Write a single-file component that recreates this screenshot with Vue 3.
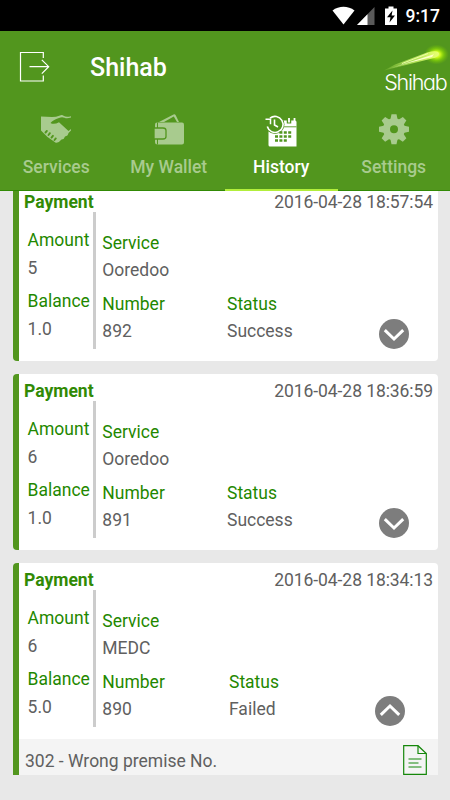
<script setup>
import { ref } from 'vue';

const activeTab = ref('History');

const tabs = ['Services', 'My Wallet', 'History', 'Settings'];

const payments = ref([
  { id: 892, amount: '5', balance: '1.0', service: 'Ooredoo', status: 'Success', date: '2016-04-28 18:57:54', open: false, message: '' },
  { id: 891, amount: '6', balance: '1.0', service: 'Ooredoo', status: 'Success', date: '2016-04-28 18:36:59', open: false, message: '' },
  { id: 890, amount: '6', balance: '5.0', service: 'MEDC', status: 'Failed', date: '2016-04-28 18:34:13', open: true, message: '302 - Wrong premise No.' }
]);

// -- Methods --

// Opens or closes the message under a payment
function togglePayment(payment) {
  payment.open = !payment.open;
}
</script>

<template>
  <div class="screen">

    <div class="status-bar">
      <svg class="status-icons" width="75" height="31" viewBox="0 0 75 31">
        <path d="M1.500 10.500C8 5.600 17 5.600 23.500 10.500L12.500 24.500Z" fill="#fff" />
        <path d="M26 25L43.500 7V25Z" fill="#5a5a5a" />
        <path d="M26 25L36.500 14.200V25Z" fill="#fff" />
        <path d="M54 8.500h3.500V6.500h5v2H66V25H54Z" fill="#fff" />
        <path d="M61.500 10.500L56 17.300H59.500L58.500 22.500L64 15.500H60.600Z" fill="#000" />
      </svg>
      <span class="clock">9:17</span>
    </div>

    <header class="app-bar">
      <svg class="exit-icon" width="32" height="32" viewBox="0 0 32 32" fill="none" stroke="#fff">
        <path d="M24.300 7V1.500H1.500V30H24.300V24.500" stroke-width="1.200" />
        <path d="M10.500 15.700H30M22.800 8.800L29.700 15.700L22.800 22.700" stroke-width="1.200" />
      </svg>
      <h1>Shihab</h1>
      <svg class="logo" width="68" height="62" viewBox="0 0 68 62">
        <defs>
          <linearGradient id="tail" gradientUnits="userSpaceOnUse" x1="2" y1="30" x2="56" y2="13">
            <stop offset="0" stop-color="#8cc63e" stop-opacity="0.3" />
            <stop offset="0.4" stop-color="#b4e65a" stop-opacity="0.8" />
            <stop offset="1" stop-color="#e6ff70" />
          </linearGradient>
          <linearGradient id="core" gradientUnits="userSpaceOnUse" x1="4" y1="29" x2="52" y2="15">
            <stop offset="0" stop-color="#fff" stop-opacity="0.2" />
            <stop offset="0.5" stop-color="#fdffe0" />
            <stop offset="1" stop-color="#ffffc0" />
          </linearGradient>
          <radialGradient id="glow">
            <stop offset="0" stop-color="#f8ff90" />
            <stop offset="0.3" stop-color="#d2ff1c" stop-opacity="0.95" />
            <stop offset="0.6" stop-color="#98e800" stop-opacity="0.55" />
            <stop offset="1" stop-color="#7ac800" stop-opacity="0" />
          </radialGradient>
        </defs>
        <ellipse cx="54.500" cy="14.500" rx="12.500" ry="10" fill="url(#glow)" />
        <path d="M2 30.500L13 24.500L45 12.500Q56 9.500 57 13.500Q57 17 50 18.500L14 27.500Z" fill="url(#tail)" />
        <path d="M6 29L52 14.200L50 17L28 22.500Z" fill="url(#core)" />
        <path d="M20 23.500L46 13.500" stroke="#f2ffb0" stroke-width="0.900" />
        <text x="2.300" y="50">Shihab</text>
      </svg>
    </header>

    <nav class="tabs">
      <button v-for="tab in tabs" :key="tab" class="tab" :class="{ active: tab === activeTab }" @click="activeTab = tab">
        <svg v-if="tab === 'Services'" width="32" height="34" viewBox="0 0 32 34">
          <path d="M1 3.500L12 4Q16 4 20 2.500Q22 1.500 24 3T31 3.300V4.500Q27 6 24.500 4.800Q22 3.500 19 5Q13 7 10.500 10Q14 12 19 9.300L28.500 18L31 16V17.500L28.500 20Q28 23 25 23.500Q24.500 26 21.500 26.500Q17 32 14 28.500L7.500 24L1 17.500Z" fill="currentColor" />
          <path d="M5.500 19.500l1.400-1.600M8.500 22l1.400-1.800M11.500 24.600l1.400-1.800M14.500 27l1.300-1.600" stroke="#52961e" stroke-width="1.900" stroke-linecap="round" />
        </svg>
        <svg v-else-if="tab === 'My Wallet'" width="32" height="34" viewBox="0 0 32 34">
          <path d="M6 9L20.500 1.500Q22 1 22.700 2.300L26 9H24L20.800 3.500L11 9Z" fill="currentColor" />
          <path d="M4 9.500H29Q31 9.500 31 11.500V29.500Q31 31.500 29 31.500H4.500Q2 31.500 2 29V11.500Q2 9.500 4 9.500Z" fill="currentColor" />
          <path d="M4.500 9.500V31.500" stroke="#52961e" />
          <path d="M1 15H10Q13 15 13 17.500V23.500Q13 26 10 26H1Z" fill="currentColor" stroke="#52961e" stroke-width="1.300" />
        </svg>
        <svg v-else-if="tab === 'History'" width="32" height="34" viewBox="0 -2 32 34">
          <path d="M16.500 5.500H30Q31.500 5.500 31.500 7V31.500H5Q3.500 31.500 3.500 30V16L16 12.500V12H17Z" fill="#fff" />
          <path d="M19 11.800H31.500" stroke="#52961e" stroke-width="0.900" />
          <path d="M24 1.500V8.500" stroke="#52961e" stroke-width="4.500" />
          <path d="M24 3V7.500M29.500 3V7.500" stroke="#fff" stroke-width="1.800" />
          <circle cx="10" cy="9.500" r="9.500" fill="#52961e" />
          <path d="M5 3.200A8 8 0 1 1 2.300 11.500" fill="none" stroke="#fff" stroke-width="1.600" />
          <path d="M0.500 4.200H5.500V9.200" fill="none" stroke="#fff" stroke-width="1.500" />
          <path d="M9.500 4.500V10L13 12" fill="none" stroke="#fff" stroke-width="1.600" />
          <path d="M14.400 17.500H26.500M10 21.500H26.500M10 25.500H22.500" fill="none" stroke="#52961e" stroke-width="2.700" stroke-dasharray="3 1.400" />
        </svg>
        <svg v-else width="32" height="34" viewBox="0 0 32 34">
          <g fill="currentColor">
            <path v-for="angle in [0, 45, 90, 135, 180, 225, 270, 315]" :key="angle" d="M13.500 1.300H18.500L20 8.300H12Z" :transform="`rotate(${angle} 16 16.300)`" />
          </g>
          <circle cx="16" cy="16.300" r="7.500" fill="none" stroke="currentColor" stroke-width="7" />
        </svg>
        <span>{{ tab }}</span>
      </button>
    </nav>

    <main class="history">
      <div class="payment-list">
        <article v-for="payment in payments" :key="payment.id" class="payment">
          <div class="payment-head">
            <strong>Payment</strong>
            <time>{{ payment.date }}</time>
          </div>
          <div class="payment-body">
            <dl class="amounts">
              <dt>Amount</dt>
              <dd>{{ payment.amount }}</dd>
              <dt>Balance</dt>
              <dd>{{ payment.balance }}</dd>
            </dl>
            <dl class="details">
              <dt>Service</dt>
              <dd>{{ payment.service }}</dd>
              <dt>Number</dt>
              <dd>{{ payment.id }}</dd>
            </dl>
            <dl class="state" :class="{ shifted: payment.open }">
              <dt>Status</dt>
              <dd>{{ payment.status }}</dd>
            </dl>
            <button class="toggle" :class="{ open: payment.open }" @click="togglePayment(payment)">
              <svg width="30" height="30" viewBox="0 0 30 30">
                <circle cx="15" cy="15" r="15" fill="#7d7d7d" />
                <path d="M5.800 11.200L15 20L24.200 11.200" fill="none" stroke="#fff" stroke-width="3" />
              </svg>
            </button>
          </div>
          <div v-if="payment.open" class="payment-message">
            <span>{{ payment.message }}</span>
            <svg width="24" height="30" viewBox="0 0 24 30" fill="none" stroke="#15870a" stroke-width="1.200">
              <path d="M0.700 0.700H15L23.300 8.500V29.300H0.700Z" />
              <path d="M15 0.700V8.500H23.300M5.500 14H18.500M5.500 18H15.500M5.500 22H18.500" />
            </svg>
          </div>
        </article>
      </div>
    </main>

  </div>
</template>

<style>
body {
  margin: 0;
}
</style>

<style scoped>
.screen {
  --green: #52961e;
  --label: #1f8800;
  --text: #606060;
  display: flex;
  flex-direction: column;
  width: 450px;
  height: 800px;
  overflow: hidden;
  background: #e8e8e8;
  font-family: Roboto, sans-serif;
  font-size: 17.5px;
  color: var(--text);
}

button {
  padding: 0;
  border: 0;
  background: none;
  font: inherit;
}

svg {
  display: block;
}

.status-bar {
  display: flex;
  justify-content: flex-end;
  align-items: center;
  height: 31px;
  padding-right: 10px;
  background: #000;
  color: #fff;
}

.clock {
  padding-top: 2px;
  line-height: 31px;
  font-weight: 500;
}

.app-bar {
  display: flex;
  align-items: center;
  height: 72px;
  background: var(--green);
}

.exit-icon {
  margin-left: 19px;
}

h1 {
  flex: 1;
  margin: 0 0 0 39px;
  font-size: 25px;
  font-weight: 500;
  color: #fff;
}

.logo {
  align-self: flex-end;
  margin-bottom: 1px;
}

.logo text {
  font: 300 21.5px Inter, sans-serif;
  font-feature-settings: "cv11";
  letter-spacing: -1.3px;
  fill: #fff;
}

.tabs {
  display: flex;
  height: 88px;
  background: var(--green);
  box-shadow: inset 0 -1px #318a05;
}

.tab {
  box-sizing: border-box;
  display: flex;
  flex: 1;
  flex-direction: column;
  align-items: center;
  padding-top: 10px;
  border-bottom: 2px solid transparent;
  font-weight: 500;
  color: #a8cb8e;
}

.tab span {
  margin-top: 8px;
  line-height: 24px;
}

.tab.active {
  border-bottom-color: #b2ee3b;
  color: #fff;
}

.history {
  height: 584px;
  overflow: hidden;
}

/* The list is scrolled a little under the tabs */
.payment-list {
  display: flex;
  flex-direction: column;
  gap: 13px;
  margin: -6px 12.5px 0 13px;
}

.payment {
  box-sizing: border-box;
  min-height: 176px;
  border-left: 6px solid var(--green);
  border-radius: 4px;
  background: #fff;
  overflow: hidden;
}

.payment-head {
  display: flex;
  justify-content: space-between;
  height: 21.500px;
  padding: 5.500px 4.500px 0 5px;
  line-height: 23px;
}

.payment-head strong {
  color: #318a05;
}

.payment-head time {
  letter-spacing: -0.08px;
}

.payment-body {
  display: flex;
  height: 136.500px;
  padding-bottom: 12.500px;
}

dl,
dd {
  margin: 0;
}

dt,
dd {
  line-height: 27.500px;
  white-space: nowrap;
}

dt {
  color: var(--label);
}

dd + dt {
  margin-top: 6px;
}

.amounts {
  box-sizing: border-box;
  width: 77px;
  padding: 15px 0 0 8.600px;
  border-right: 3px solid #ccc;
}

.details {
  width: 118.500px;
  padding: 17.500px 0 0 6.300px;
}

.state {
  flex: 1;
  padding: 78.500px 0 0 6.200px;
}

.state.shifted {
  padding-left: 8.200px;
}

.toggle {
  align-self: flex-end;
  margin-right: 29px;
}

.toggle.open {
  margin: 0 32.500px 1px 0;
}

.toggle.open svg {
  transform: rotate(180deg);
}

.payment-message {
  display: flex;
  justify-content: space-between;
  align-items: flex-start;
  height: 36px;
  padding: 6px 10.500px 0 6px;
  background: #f4f4f4;
}

.payment-message span {
  line-height: 32px;
}
</style>
